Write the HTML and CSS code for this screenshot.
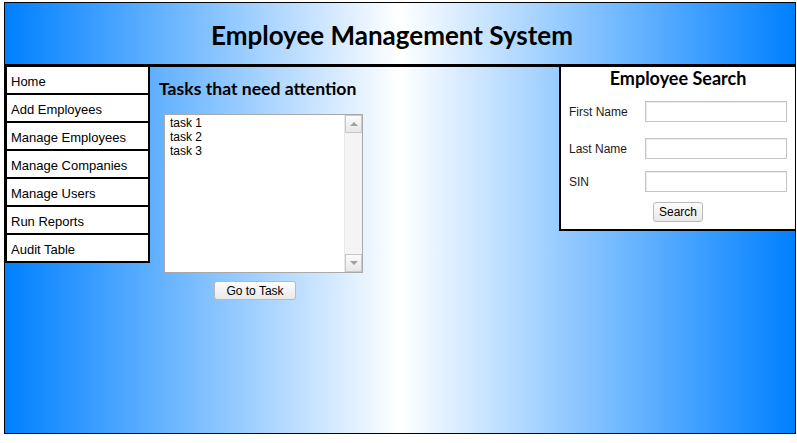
FILE: index.html
```html
<!DOCTYPE html>
<html>
<head>
<meta charset="utf-8">
<title>Employee Management System</title>
<link rel="stylesheet" href="styles.css">
</head>
<body>
<div class="page">
  <header class="header">
    <h1 class="title">Employee Management System</h1>
  </header>
  <div class="main">
    <nav class="nav">
      <ul class="nav-list">
        <li class="nav-item">Home</li>
        <li class="nav-item">Add Employees</li>
        <li class="nav-item">Manage Employees</li>
        <li class="nav-item">Manage Companies</li>
        <li class="nav-item">Manage Users</li>
        <li class="nav-item">Run Reports</li>
        <li class="nav-item">Audit Table</li>
      </ul>
    </nav>
    <section class="tasks">
      <h2 class="tasks-title">Tasks that need attention</h2>
      <div class="listbox">
        <div class="list-items">
          <div class="list-item">task 1</div>
          <div class="list-item">task 2</div>
          <div class="list-item">task 3</div>
        </div>
        <div class="scrollbar">
          <div class="sb-btn"><span class="arrow-up"></span></div>
          <div class="sb-track"></div>
          <div class="sb-btn"><span class="arrow-down"></span></div>
        </div>
      </div>
      <button class="btn btn-go">Go to Task</button>
    </section>
    <aside class="search">
      <h2 class="search-title">Employee Search</h2>
      <div class="form-row row-1">
        <label class="form-label">First Name</label>
        <input class="form-input" type="text">
      </div>
      <div class="form-row row-2">
        <label class="form-label">Last Name</label>
        <input class="form-input" type="text">
      </div>
      <div class="form-row row-3">
        <label class="form-label">SIN</label>
        <input class="form-input" type="text">
      </div>
      <div class="search-actions">
        <button class="btn btn-search">Search</button>
      </div>
    </aside>
  </div>
</div>
</body>
</html>
```

FILE: styles.css
```css
html, body {
  margin: 0;
  padding: 0;
  background: #fff;
}

.page {
  margin: 2px 0 0 4px;
  width: 790px;
  height: 430px;
  border: 1px solid #000;
  background: linear-gradient(to right, #0080ff 0%, #ffffff 50%, #0080ff 100%);
  font-family: "Liberation Sans", Arial, sans-serif;
}

.header {
  height: 61px;
  border-bottom: 3px solid #000;
  display: flex;
  align-items: center;
  justify-content: center;
}

.title {
  margin: 0;
  padding: 2px 16px 0 0;
  font-family: Lato, "Open Sans", sans-serif;
  font-weight: bold;
  font-size: 26px;
  color: #000;
}

.main {
  display: flex;
  align-items: flex-start;
}

.nav {
  width: 141px;
  border-left: 2px solid #000;
  border-right: 2px solid #000;
  background: #fff;
}

.nav-list {
  list-style: none;
  margin: 0;
  padding: 0;
}

.nav-item {
  height: 26px;
  line-height: 29px;
  padding-left: 4px;
  border-bottom: 2px solid #000;
  font-size: 13px;
  color: #000;
}

.tasks {
  width: 409px;
  padding-top: 11px;
}

.tasks-title {
  margin: 0 0 0 9px;
  font-family: Lato, "Open Sans", sans-serif;
  font-weight: bold;
  font-size: 17.6px;
  line-height: 22px;
  color: #000;
}

.listbox {
  margin: 14px 0 0 14px;
  width: 197px;
  height: 157px;
  border: 1px solid #a9a9a9;
  background: #fff;
  display: flex;
}

.list-items {
  flex: 1;
  padding: 1px 0 0 5px;
}

.list-item {
  font-size: 12px;
  line-height: 14px;
  color: #000;
}

.scrollbar {
  width: 17px;
  display: flex;
  flex-direction: column;
  background: #f4f4f4;
  border-left: 1px solid #e8e8e8;
}

.sb-btn {
  height: 16px;
  border: 1px solid #c9c9c9;
  background: linear-gradient(#fbfbfb, #e7e7e7);
  display: flex;
  align-items: center;
  justify-content: center;
}

.sb-track {
  flex: 1;
}

.arrow-up {
  width: 0;
  height: 0;
  border-left: 4px solid transparent;
  border-right: 4px solid transparent;
  border-bottom: 4px solid #a0a0a0;
}

.arrow-down {
  width: 0;
  height: 0;
  border-left: 4px solid transparent;
  border-right: 4px solid transparent;
  border-top: 4px solid #a0a0a0;
}

.btn {
  font-family: "Liberation Sans", Arial, sans-serif;
  font-size: 12px;
  color: #000;
  background: linear-gradient(#fdfdfd, #e9e9e9);
  border: 1px solid #b9b9b9;
  border-radius: 3px;
  padding: 0;
}

.btn-go {
  display: block;
  margin: 8px 0 0 64px;
  width: 82px;
  height: 19px;
}

.search {
  width: 234px;
  height: 162px;
  border-left: 2px solid #000;
  border-bottom: 2px solid #000;
  background: #fff;
}

.search-title {
  margin: 0;
  padding-top: 0;
  text-align: center;
  font-family: Lato, "Open Sans", sans-serif;
  font-weight: bold;
  font-size: 18px;
  line-height: 22px;
  color: #000;
}

.form-row {
  display: flex;
  align-items: center;
  padding-left: 8px;
}

.row-1 {
  margin-top: 12px;
}

.row-2 {
  margin-top: 16px;
}

.row-3 {
  margin-top: 12px;
}

.form-label {
  width: 76px;
  font-size: 12px;
  color: #1a1a1a;
}

.form-input {
  box-sizing: border-box;
  width: 142px;
  height: 21px;
  margin: 0;
  border: 1px solid #c4c4c4;
  box-shadow: inset 1px 1px 0 #ececec;
  background: #fff;
}

.search-actions {
  display: flex;
  justify-content: center;
  margin-top: 10px;
}

.btn-search {
  width: 50px;
  height: 20px;
}
```
